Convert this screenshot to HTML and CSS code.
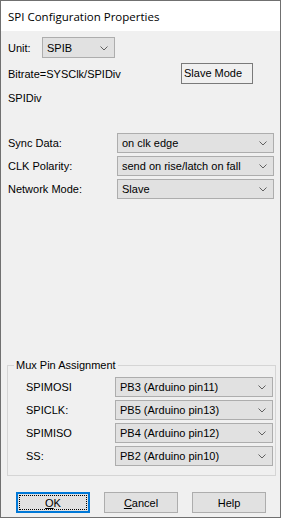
FILE: index.html
```html
<!DOCTYPE html>
<html>
<head>
<meta charset="utf-8">
<link rel="stylesheet" href="styles.css">
</head>
<body>
<div class="window">
  <div class="titlebar">SPI Configuration Properties</div>
  <div class="content">
    <div class="unit-row">
      <span class="unit-lbl">Unit:</span>
      <div class="combo combo-unit"><span>SPIB</span><svg class="chev" width="8" height="5" viewBox="0 0 8 5"><path d="M0.5 0.5 L4 4 L7.5 0.5" fill="none" stroke="#606060" stroke-width="1"/></svg></div>
    </div>
    <div class="bitrate-row">
      <span class="bitrate-lbl">Bitrate=SYSClk/SPIDiv</span>
      <div class="static-box">Slave Mode</div>
    </div>
    <div class="spidiv-row">SPIDiv</div>
    <div class="form">
      <span class="lbl">Sync Data:</span>
      <div class="combo"><span>on clk edge</span><svg class="chev" width="8" height="5" viewBox="0 0 8 5"><path d="M0.5 0.5 L4 4 L7.5 0.5" fill="none" stroke="#606060" stroke-width="1"/></svg></div>
      <span class="lbl">CLK Polarity:</span>
      <div class="combo"><span>send on rise/latch on fall</span><svg class="chev" width="8" height="5" viewBox="0 0 8 5"><path d="M0.5 0.5 L4 4 L7.5 0.5" fill="none" stroke="#606060" stroke-width="1"/></svg></div>
      <span class="lbl">Network Mode:</span>
      <div class="combo"><span>Slave</span><svg class="chev" width="8" height="5" viewBox="0 0 8 5"><path d="M0.5 0.5 L4 4 L7.5 0.5" fill="none" stroke="#606060" stroke-width="1"/></svg></div>
    </div>
    <fieldset class="group">
      <legend>Mux Pin Assignment</legend>
      <div class="group-form">
        <span class="lbl">SPIMOSI</span>
        <div class="combo"><span>PB3 (Arduino pin11)</span><svg class="chev" width="8" height="5" viewBox="0 0 8 5"><path d="M0.5 0.5 L4 4 L7.5 0.5" fill="none" stroke="#606060" stroke-width="1"/></svg></div>
        <span class="lbl">SPICLK:</span>
        <div class="combo"><span>PB5 (Arduino pin13)</span><svg class="chev" width="8" height="5" viewBox="0 0 8 5"><path d="M0.5 0.5 L4 4 L7.5 0.5" fill="none" stroke="#606060" stroke-width="1"/></svg></div>
        <span class="lbl">SPIMISO</span>
        <div class="combo"><span>PB4 (Arduino pin12)</span><svg class="chev" width="8" height="5" viewBox="0 0 8 5"><path d="M0.5 0.5 L4 4 L7.5 0.5" fill="none" stroke="#606060" stroke-width="1"/></svg></div>
        <span class="lbl">SS:</span>
        <div class="combo"><span>PB2 (Arduino pin10)</span><svg class="chev" width="8" height="5" viewBox="0 0 8 5"><path d="M0.5 0.5 L4 4 L7.5 0.5" fill="none" stroke="#606060" stroke-width="1"/></svg></div>
      </div>
    </fieldset>
    <div class="buttons">
      <button class="btn btn-default"><span class="focus"><u>O</u>K</span></button>
      <button class="btn"><u>C</u>ancel</button>
      <button class="btn">Help</button>
    </div>
  </div>
</div>
</body>
</html>
```

FILE: styles.css
```css
* { box-sizing: border-box; }
html, body { margin: 0; padding: 0; }
body {
  width: 281px;
  height: 518px;
  font-family: "Liberation Sans", Arial, sans-serif;
  font-size: 11px;
  color: #000;
}
.window {
  width: 281px;
  height: 518px;
  border: 1px solid #707070;
  background: #f0f0f0;
  display: flex;
  flex-direction: column;
}
.titlebar {
  height: 30px;
  background: #fff;
  font-family: "Open Sans", "Noto Sans", sans-serif;
  font-size: 11.5px;
  line-height: 30px;
  padding-left: 7px;
  padding-top: 1px;
  color: #000;
}
.content {
  flex: 1;
  padding: 0 0 0 7px;
  display: flex;
  flex-direction: column;
}
.unit-row {
  margin-top: 6px;
  height: 21px;
  display: flex;
  align-items: center;
}
.unit-lbl { width: 34px; }
.combo {
  height: 20px;
  background: #e1e1e1;
  border: 1px solid #adadad;
  display: flex;
  align-items: center;
  justify-content: space-between;
  padding: 0 6px 0 4px;
  white-space: nowrap;
}
.combo-unit { width: 73px; height: 21px; }
.chev { flex: none; margin-top: 1px; }
.bitrate-row {
  margin-top: 5px;
  height: 21px;
  display: flex;
  align-items: center;
}
.bitrate-lbl { width: 173px; }
.static-box {
  width: 72px;
  height: 21px;
  border: 1px solid #7a7a7a;
  background: #f0f0f0;
  padding-left: 2px;
  line-height: 19px;
}
.spidiv-row {
  margin-top: 4px;
  height: 21px;
  line-height: 21px;
}
.form {
  margin-top: 24px;
  display: grid;
  grid-template-columns: 109px 157px;
  grid-auto-rows: 20px;
  row-gap: 3px;
  align-items: center;
}
.group {
  margin: 160px 0 0 -1px;
  width: 269px;
  border: 1px solid #d5d5d5;
  padding: 5px 0 9px 18px;
  min-width: 0;
}
.group legend {
  line-height: 13px;
  padding: 0 2px;
  margin-left: -12px;
}
.group-form {
  display: grid;
  grid-template-columns: 89px 158px;
  grid-auto-rows: 20px;
  row-gap: 3px;
  align-items: center;
}
.buttons {
  margin-top: 16px;
  margin-left: 8px;
  display: flex;
  gap: 14px;
}
.btn {
  width: 74px;
  height: 21px;
  background: #e1e1e1;
  border: 1px solid #adadad;
  font-family: "Liberation Sans", Arial, sans-serif;
  font-size: 11px;
  color: #000;
  padding: 0;
  margin: 0;
  display: flex;
  align-items: center;
  justify-content: center;
}
.btn-default {
  border: 2px solid #0078d7;
  padding: 1px;
}
.focus {
  width: 100%;
  height: 100%;
  border: 1px dotted #000;
  display: flex;
  align-items: center;
  justify-content: center;
}
```
